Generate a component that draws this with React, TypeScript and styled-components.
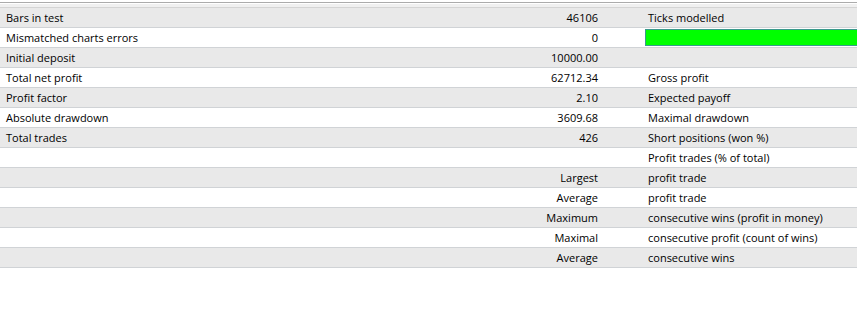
import React from 'react';
import styled, { createGlobalStyle } from 'styled-components';

const GlobalStyle = createGlobalStyle`
  html, body {
    margin: 0;
    padding: 0;
    background: #ffffff;
  }
`;

const Page = styled.div`
  width: 857px;
  height: 326px;
  overflow: hidden;
  background: #ffffff;
  font-family: "Open Sans", "Noto Sans", "DejaVu Sans", sans-serif;
  font-size: 11px;
  color: #000000;
`;

const TopEdge = styled.div`
  height: 6px;
  background: #f0f0f0;
  border-top: 1px solid #ababab;
  margin-top: 2px;
  box-sizing: border-box;
  box-shadow: inset 0 1px 0 #ffffff;
  border-bottom: 1px solid #d4d4d4;
`;

const Table = styled.div`
  display: flex;
  flex-direction: column;
`;

const Row = styled.div<{ $shaded: boolean }>`
  display: grid;
  grid-template-columns: 598px 50px 1fr;
  height: 20px;
  box-sizing: border-box;
  border-bottom: 1px solid #d0d3d6;
  background: ${p => (p.$shaded ? '#e9e9e9' : '#ffffff')};
  align-items: center;
`;

const Label = styled.div`
  display: flex;
  justify-content: space-between;
  padding-left: 6px;
  white-space: nowrap;
`;

const Value = styled.span`
  text-align: right;
`;

const Caption = styled.div`
  white-space: nowrap;
  grid-column: 3;
`;

const QualityBar = styled.div`
  grid-column: 2 / 4;
  margin-left: 47px;
  height: 17px;
  box-sizing: border-box;
  background: #00ff00;
  border: 1px solid #3a9a8c;
  border-right: none;
`;

type Line = {
  label?: string;
  value?: string;
  caption?: string;
  bar?: boolean;
};

const lines: Line[] = [
  { label: 'Bars in test', value: '46106', caption: 'Ticks modelled' },
  { label: 'Mismatched charts errors', value: '0', bar: true },
  { label: 'Initial deposit', value: '10000.00' },
  { label: 'Total net profit', value: '62712.34', caption: 'Gross profit' },
  { label: 'Profit factor', value: '2.10', caption: 'Expected payoff' },
  { label: 'Absolute drawdown', value: '3609.68', caption: 'Maximal drawdown' },
  { label: 'Total trades', value: '426', caption: 'Short positions (won %)' },
  { caption: 'Profit trades (% of total)' },
  { value: 'Largest', caption: 'profit trade' },
  { value: 'Average', caption: 'profit trade' },
  { value: 'Maximum', caption: 'consecutive wins (profit in money)' },
  { value: 'Maximal', caption: 'consecutive profit (count of wins)' },
  { value: 'Average', caption: 'consecutive wins' },
];

export default function App() {
  return (
    <Page>
      <GlobalStyle />
      <TopEdge />
      <Table>
        {lines.map((line, i) => (
          <Row key={i} $shaded={i % 2 === 0}>
            <Label>
              <span>{line.label}</span>
              <Value>{line.value}</Value>
            </Label>
            {line.bar ? <QualityBar /> : <Caption>{line.caption}</Caption>}
          </Row>
        ))}
      </Table>
    </Page>
  );
}
